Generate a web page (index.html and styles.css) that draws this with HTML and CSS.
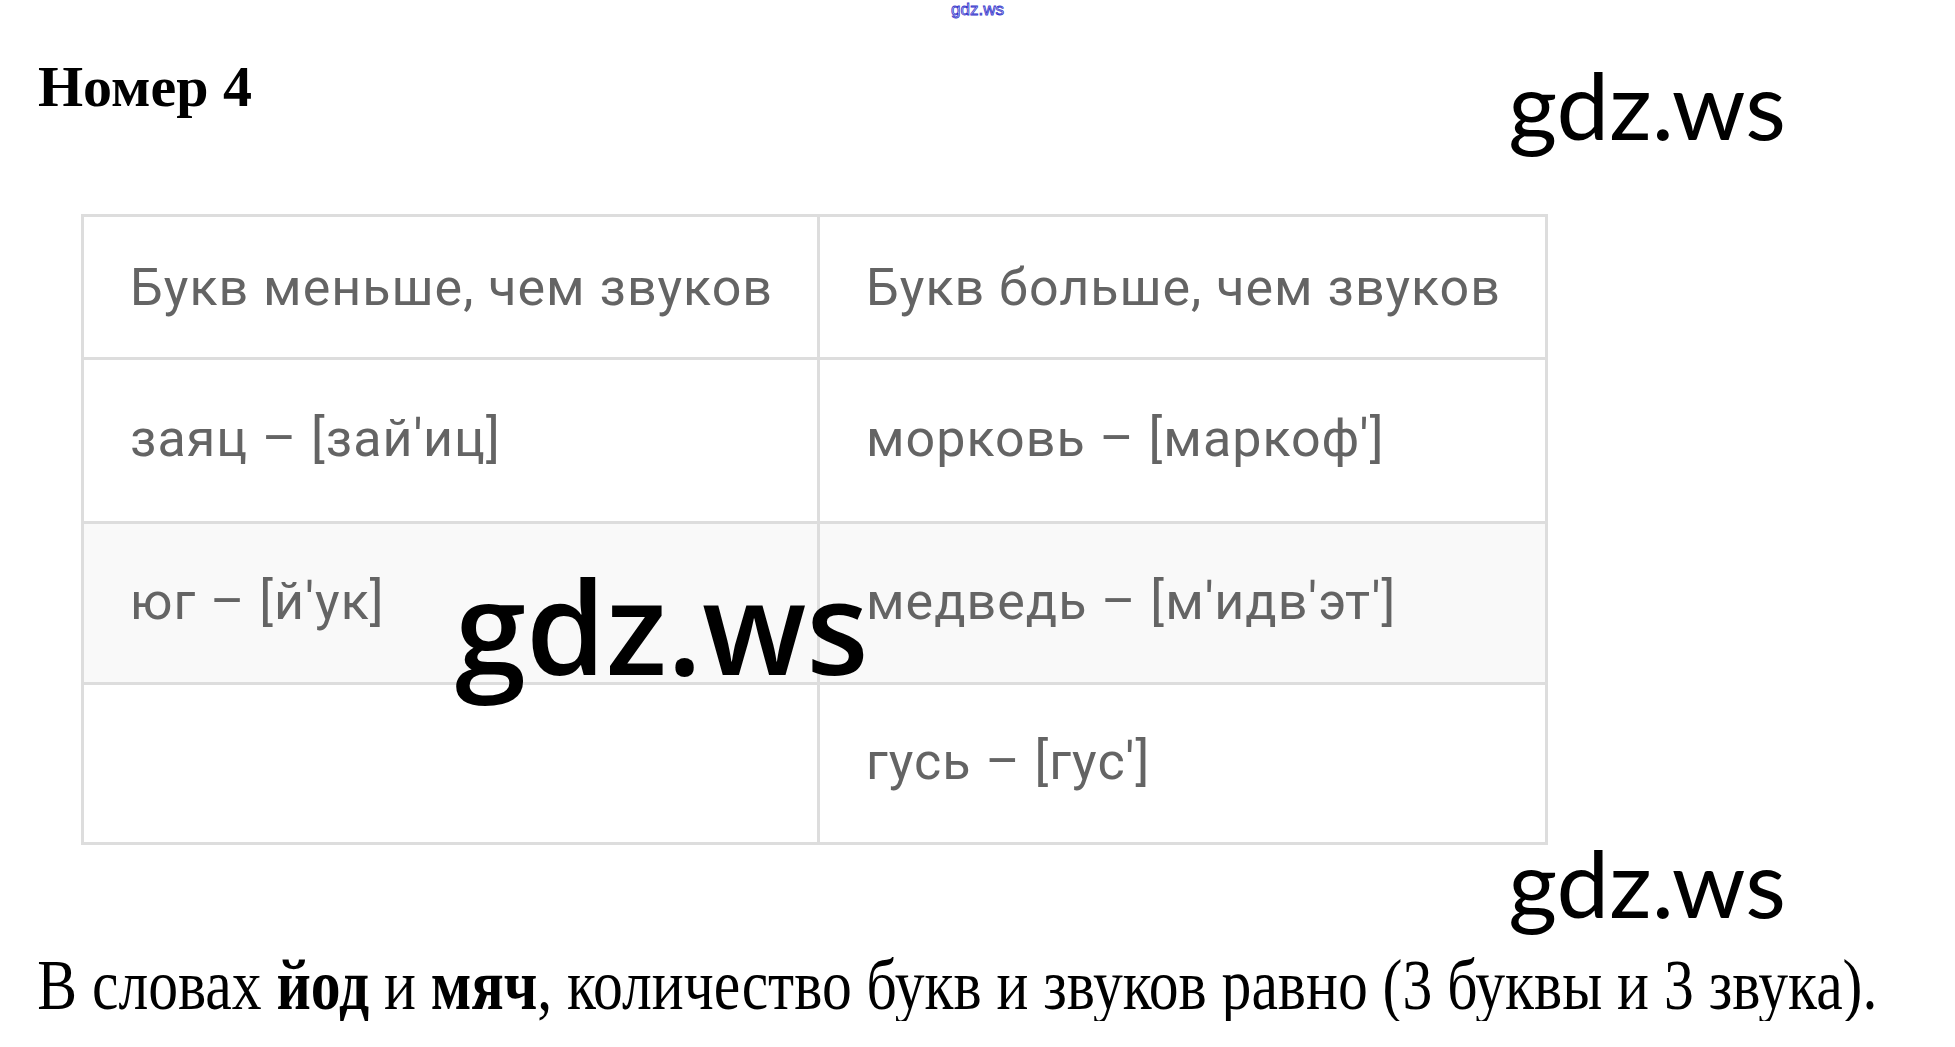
FILE: index.html
```html
<!DOCTYPE html>
<html lang="ru">
<head>
<meta charset="utf-8">
<link rel="stylesheet" href="styles.css">
</head>
<body>
<div class="page">
  <div class="tiny">gdz.ws</div>
  <div class="header">
    <h1 class="title">Номер 4</h1>
    <div class="mark mark-top">gdz.ws</div>
  </div>
  <div class="table-wrap">
    <table class="sounds">
      <tr class="head"><td class="c1">Букв меньше, чем звуков</td><td>Букв больше, чем звуков</td></tr>
      <tr class="r2"><td class="c1">заяц – [зай'иц]</td><td>морковь – [маркоф']</td></tr>
      <tr class="r3 striped"><td class="c1">юг – [й'ук]</td><td>медведь – [м'идв'эт']</td></tr>
      <tr class="r4"><td class="c1"></td><td>гусь – [гус']</td></tr>
    </table>
    <div class="mark-big">gdz.ws</div>
  </div>
  <div class="mark mark-bottom">gdz.ws</div>
  <p class="answer">В словах <b>йод</b> и <b>мяч</b>, количество букв и звуков равно (3 буквы и 3 звука).</p>
</div>
</body>
</html>
```
FILE: styles.css
```css
html, body {
  margin: 0;
  padding: 0;
  background: #ffffff;
}
.page {
  width: 1955px;
  position: relative;
}
.tiny {
  text-align: center;
  font-family: "Liberation Sans", Arial, sans-serif;
  font-size: 17px;
  line-height: 20px;
  height: 22px;
  color: #d0d0f4;
  -webkit-text-stroke: 0.8px #3434cc;
}
.header {
  display: flex;
  justify-content: space-between;
  align-items: flex-start;
  margin-top: 35px;
  padding-left: 38px;
  padding-right: 169px;
}
.title {
  margin: 1px 0 0 0;
  font-family: "Liberation Serif", "Times New Roman", serif;
  font-weight: bold;
  font-size: 58px;
  line-height: 58px;
  color: #000;
}
.mark {
  font-family: Lato, sans-serif;
  font-size: 94px;
  line-height: 90px;
  color: #000;
}
.mark-top {
  margin-top: 2px;
}
.table-wrap {
  position: relative;
  margin-top: 65px;
  padding-left: 81px;
}
.sounds {
  border-collapse: collapse;
  width: 1467px;
  font-family: Roboto, "Liberation Sans", sans-serif;
  font-size: 52px;
  letter-spacing: 1px;
  color: #646464;
}
.sounds td {
  border: 3px solid #dddddd;
  padding: 0 0 4px 46px;
  vertical-align: middle;
}
.sounds td.c1 {
  width: 687px;
}
.sounds tr.head td {
  height: 140px;
  padding-bottom: 0;
}
.sounds tr.r2 td {
  height: 157px;
}
.sounds tr.r3 td {
  height: 154px;
}
.sounds tr.r4 td {
  height: 153px;
}
.sounds tr.striped td {
  background: #f9f9f9;
}
.mark-big {
  position: absolute;
  left: 455px;
  top: 348px;
  font-family: "Open Sans", sans-serif;
  font-weight: 600;
  font-size: 128px;
  line-height: 128px;
  color: #000;
}
.mark-bottom {
  text-align: right;
  padding-right: 169px;
  margin-top: 2px;
  line-height: 70px;
}
.answer {
  margin: 32px 0 0 0;
  padding-left: 45px;
  font-family: "Liberation Serif", "Times New Roman", serif;
  font-size: 72px;
  line-height: 72px;
  color: #000;
  white-space: nowrap;
  transform: scaleX(0.828);
  transform-origin: left center;
}
```
